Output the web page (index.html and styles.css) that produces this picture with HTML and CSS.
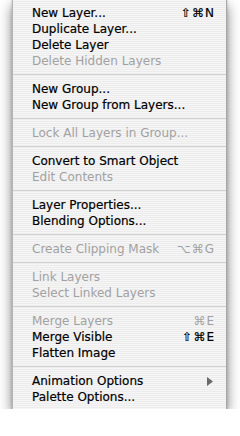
FILE: index.html
```html
<!DOCTYPE html>
<html lang="en">
<head>
    <meta charset="UTF-8">
    <meta name="viewport" content="width=device-width, initial-scale=1.0">
    <title>Layer Menu</title>
    <link rel="stylesheet" href="styles.css">
</head>
<body>
    <div class="menu">
        <div class="item"><span class="label">New Layer...</span><span class="key">⇧⌘N</span></div>
        <div class="item"><span class="label">Duplicate Layer...</span></div>
        <div class="item"><span class="label">Delete Layer</span></div>
        <div class="item off"><span class="label">Delete Hidden Layers</span></div>
        <div class="sep"></div>
        <div class="item"><span class="label">New Group...</span></div>
        <div class="item"><span class="label">New Group from Layers...</span></div>
        <div class="sep"></div>
        <div class="item off"><span class="label">Lock All Layers in Group...</span></div>
        <div class="sep"></div>
        <div class="item"><span class="label">Convert to Smart Object</span></div>
        <div class="item off"><span class="label">Edit Contents</span></div>
        <div class="sep"></div>
        <div class="item"><span class="label">Layer Properties...</span></div>
        <div class="item"><span class="label">Blending Options...</span></div>
        <div class="sep"></div>
        <div class="item off"><span class="label">Create Clipping Mask</span><span class="key">⌥⌘G</span></div>
        <div class="sep"></div>
        <div class="item off"><span class="label">Link Layers</span></div>
        <div class="item off"><span class="label">Select Linked Layers</span></div>
        <div class="sep"></div>
        <div class="item off"><span class="label">Merge Layers</span><span class="key">⌘E</span></div>
        <div class="item"><span class="label">Merge Visible</span><span class="key">⇧⌘E</span></div>
        <div class="item"><span class="label">Flatten Image</span></div>
        <div class="sep"></div>
        <div class="item">
            <span class="label">Animation Options</span>
            <svg class="arrow" width="6" height="9" viewBox="0 0 6 9"><polygon points="0,0 6,4.5 0,9" fill="#6a6a6a"/></svg>
        </div>
        <div class="item"><span class="label">Palette Options...</span></div>
    </div>
</body>
</html>
```

FILE: styles.css
```css
body {
    margin: 0;
    padding: 0;
    background: #ffffff;
    font-family: "DejaVu Sans", "Noto Sans", sans-serif;
}
.menu {
    width: 213px;
    margin-left: 12px;
    padding: 5px 0 4px;
    background: repeating-linear-gradient(to bottom, #f6f6f6 0, #f6f6f6 1px, #ececec 1px, #ececec 2px);
    border-left: 1px solid #b4b4b4;
    border-right: 1px solid #a8a8a8;
    box-shadow: 0 6px 12px rgba(0, 0, 0, 0.5), 0 0 3px rgba(0, 0, 0, 0.2);
}
.item {
    display: flex;
    align-items: center;
    justify-content: space-between;
    height: 16px;
    padding: 0 12px 0 19px;
    font-size: 12px;
    color: #000;
    -webkit-text-stroke: 0.2px currentColor;
}
.item.off {
    color: #a2a2a2;
    -webkit-text-stroke: 0;
}
.key {
    font-size: 12px;
    letter-spacing: 1px;
    margin-right: -1px;
}
.arrow {
    margin-right: 1px;
}
.sep {
    height: 12px;
    background: linear-gradient(#d2d2d2, #d2d2d2) no-repeat 0 5px / 100% 1px;
}
```
